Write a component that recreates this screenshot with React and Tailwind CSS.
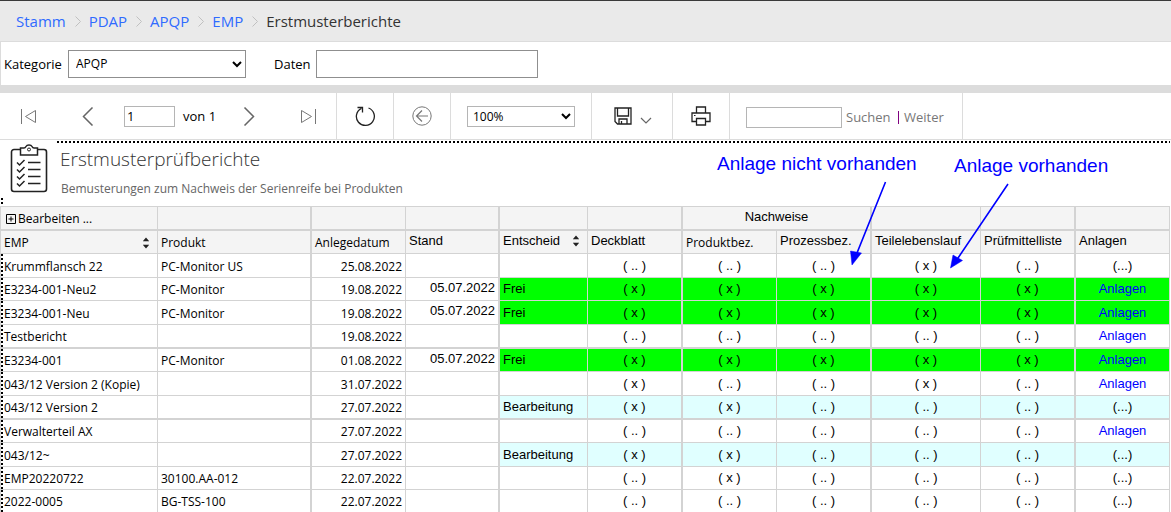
import React from "react";

const UI = "font-['Open_Sans','Noto_Sans',sans-serif]";
const ARIAL = "font-['Liberation_Sans',Arial,sans-serif]";

const crumbs = ["Stamm", "PDAP", "APQP", "EMP"];

const N = "( .. )";
const X = "( x )";
const LINK = "Anlagen";
const NONE = "(...)";

const rows = [
  { emp: "Krummflansch 22", produkt: "PC-Monitor US", angelegt: "25.08.2022", marks: [N, N, N, X, N], anlagen: NONE, size: "h-6" },
  { emp: "E3234-001-Neu2", produkt: "PC-Monitor", angelegt: "19.08.2022", stand: "05.07.2022", status: "Frei", marks: [X, X, X, X, X], anlagen: LINK, size: "h-[23px]" },
  { emp: "E3234-001-Neu", produkt: "PC-Monitor", angelegt: "19.08.2022", stand: "05.07.2022", status: "Frei", marks: [X, X, X, X, X], anlagen: LINK, size: "h-6" },
  { emp: "Testbericht", angelegt: "19.08.2022", marks: [N, N, N, N, N], anlagen: LINK, size: "h-6", thick: true },
  { emp: "E3234-001", produkt: "PC-Monitor", angelegt: "01.08.2022", stand: "05.07.2022", status: "Frei", marks: [X, X, X, X, X], anlagen: LINK, size: "h-[23px]" },
  { emp: "043/12 Version 2 (Kopie)", angelegt: "31.07.2022", marks: [X, N, N, X, N], anlagen: LINK, size: "h-6" },
  { emp: "043/12 Version 2", angelegt: "27.07.2022", status: "Bearbeitung", marks: [X, X, N, N, N], anlagen: NONE, size: "h-6", thick: true },
  { emp: "Verwalterteil AX", angelegt: "27.07.2022", marks: [N, N, N, N, N], anlagen: LINK, size: "h-[23px]" },
  { emp: "043/12~", angelegt: "27.07.2022", status: "Bearbeitung", marks: [X, X, N, N, N], anlagen: NONE, size: "h-6" },
  { emp: "EMP20220722", produkt: "30100.AA-012", angelegt: "22.07.2022", marks: [N, X, N, N, N], anlagen: NONE, size: "h-[23px]" },
  { emp: "2022-0005", produkt: "BG-TSS-100", angelegt: "22.07.2022", marks: [N, N, N, N, N], anlagen: NONE, size: "h-[22px]", last: true },
];

const statusBg = { Frei: "bg-[#00ff00]", Bearbeitung: "bg-[#e0ffff]" };

const DOTS_X = "bg-[repeating-linear-gradient(90deg,#000_0_2px,transparent_2px_4px)]";
const DOTS_Y = "bg-[repeating-linear-gradient(180deg,#000_0_2px,transparent_2px_4px)]";

function Icon({ w, h, children, className = "" }) {
  return (
    <svg width={w} height={h} viewBox={`0 0 ${w} ${h}`} fill="none" stroke="currentColor" className={`block shrink-0 ${className}`} aria-hidden="true">
      {children}
    </svg>
  );
}

function SortButton({ label }) {
  return (
    <button type="button" aria-label={label} className="shrink-0">
      <Icon w={8} h={12}>
        <path d="M4 0.5 7 4H1ZM4 11.5 1 8h6Z" fill="#222" stroke="none" />
        <path d="M1 4.5h6M1 7.5h6" stroke="#bbb" />
      </Icon>
    </button>
  );
}

function Breadcrumb() {
  return (
    <nav aria-label="Pfad" className="flex h-[42px] items-center border-t border-b border-t-[#3a3a3a] border-b-[#dcdcdc] bg-[#eaeaea] pl-4 text-[15px] leading-5">
      {crumbs.map((c) => (
        <span key={c} className="flex items-center">
          <a href="#" className="text-[#2f6bff]">{c}</a>
          <Icon w={6} h={11} className="mr-2 ml-[9px] text-[#c0c0c0]">
            <path d="M0.5 0.5 5.5 5.5 0.5 10.5" />
          </Icon>
        </span>
      ))}
      <span className="text-[#333]">Erstmusterberichte</span>
    </nav>
  );
}

function Filters() {
  return (
    <form className="flex h-[43px] items-center border-l border-[#dcdcdc] pl-[3px] text-[13px]">
      <label htmlFor="kat" className="w-16 pt-[3px]">Kategorie</label>
      <select id="kat" defaultValue="APQP" className="h-7 w-[178px] border border-[#8f8f8f] bg-white px-[3px] text-[12px]">
        <option>APQP</option>
      </select>
      <label htmlFor="daten" className="ml-7 w-[42px] pt-[3px]">Daten</label>
      <input id="daten" className="h-7 w-[222px] border border-[#8f8f8f] bg-white px-1" />
    </form>
  );
}

function Toolbar() {
  const group = "flex h-full shrink-0 items-center border-r border-[#dcdcdc]";
  return (
    <div role="toolbar" aria-label="Bericht" className="flex h-[55px] items-center border-t-8 border-b border-[#dcdcdc] text-[13px]">
      <div className={`${group} w-[337px] pl-5`}>
        <button type="button" aria-label="Erste Seite" className="text-[#777]">
          <Icon w={16} h={15}><path d="M1.5 0v15M15.5 1.5v12L5.5 7.5Z" /></Icon>
        </button>
        <button type="button" aria-label="Vorherige Seite" className="ml-[46px] text-[#666]">
          <Icon w={12} h={19}><path d="M10.5 0.5 1.5 9.5 10.5 18.5" strokeWidth="1.5" /></Icon>
        </button>
        <input aria-label="Seite" defaultValue="1" className="ml-[30px] h-[21px] w-[51px] border border-[#b5b5b5] px-[2px]" />
        <span className="ml-2 w-[58px] pt-[2px]">von 1</span>
        <button type="button" aria-label="Nächste Seite" className="ml-[2px] text-[#666]">
          <Icon w={12} h={19}><path d="M1.5 0.5 10.5 9.5 1.5 18.5" strokeWidth="1.5" /></Icon>
        </button>
        <button type="button" aria-label="Letzte Seite" className="ml-[46px] text-[#777]">
          <Icon w={16} h={15}><path d="M14.5 0v15M0.5 1.5v12L10.5 7.5Z" /></Icon>
        </button>
      </div>
      <div className={`${group} w-[57px] justify-center`}>
        <button type="button" aria-label="Aktualisieren" className="text-[#222]">
          <Icon w={21} h={21}>
            <path d="M13.5 2a9 9 0 1 1-7 .3" strokeWidth="1.3" />
            <path d="M2.5 1.5h5v5" strokeWidth="1.3" />
          </Icon>
        </button>
      </div>
      <div className={`${group} w-[57px] justify-center`}>
        <button type="button" aria-label="Zurück" className="text-[#777]">
          <Icon w={20} h={20}>
            <circle cx="10" cy="10" r="9.2" />
            <path d="M16 10H4.5M10 4.5 4.5 10l5.5 5.5" strokeWidth="1.2" />
          </Icon>
        </button>
      </div>
      <div className={`${group} w-[141px] pl-4`}>
        <select aria-label="Zoom" defaultValue="100%" className="h-[21px] w-[108px] border border-[#b5b5b5] bg-white px-px text-[12px]">
          <option>100%</option>
        </select>
      </div>
      <div className={`${group} w-[81px] pl-[22px]`}>
        <button type="button" aria-label="Exportieren" className="flex items-end gap-2 text-[#222]">
          <Icon w={18} h={18}>
            <path d="M1 1h16v16H3.5L1 14.5Z" strokeWidth="1.3" />
            <path d="M3.5 1v8h11V1M5 17v-5h8v5M7.5 14v3" strokeWidth="1.3" />
          </Icon>
          <Icon w={12} h={8}><path d="M1 1l5 5 5-5" stroke="#666" strokeWidth="1.2" /></Icon>
        </button>
      </div>
      <div className={`${group} w-[57px] justify-center`}>
        <button type="button" aria-label="Drucken" className="text-[#222]">
          <Icon w={20} h={20}>
            <path d="M5.5 7V1h9v6M5.5 15.5H1V7h18v8.5h-4.5M5.5 12.5h9V19h-9Z" strokeWidth="1.3" />
            <path d="M3 9.5h1.5" />
          </Icon>
        </button>
      </div>
      <div className={`${group} w-[233px] pt-[2px] pl-4 text-[#777]`}>
        <input aria-label="Suchtext" className="h-[21px] w-24 border border-[#b5b5b5] px-1" />
        <button type="button" className="ml-1 w-[52px] pt-[2px] text-left">Suchen</button>
        <span className="h-[13px] w-px bg-[#800080]" />
        <button type="button" className="ml-[5px] pt-[2px]">Weiter</button>
      </div>
    </div>
  );
}

function ClipboardIcon() {
  return (
    <Icon w={38} h={49} className="text-[#222]">
      <path d="M10 5.5H4A2.5 2.5 0 0 0 1.5 8v37A2.500 2.500 0 0 0 4 47.500h30a2.500 2.500 0 0 0 2.500-2.500V8A2.500 2.500 0 0 0 34 5.500h-6" strokeWidth="1.600" />
      <path d="M10.500 11V4H14c1 0 1.500-.5 2-1.500 1-2 5-2 6 0 .5 1 1 1.500 2 1.500h3.500v7Z" strokeWidth="1.500" />
      <circle cx="19" cy="5.500" r="1.500" />
      <path d="M18 18.500H30.500M18 25.500H30.500M18 32.500H30.500M18 39.500H30.500" strokeWidth="1.500" />
      <path d="M7 18.500l2.500 2.500 5-5M7 25.500l2.500 2.500 5-5M7 32.500l2.500 2.500 5-5M7 39.500l2.500 2.500 5-5" strokeWidth="1.500" />
    </Icon>
  );
}

function Annotations() {
  return (
    <div className={`pointer-events-none absolute inset-0 text-[19px] leading-6 text-[#0000ff] ${ARIAL}`}>
      <span className="absolute top-3 left-[717px] whitespace-nowrap">Anlage nicht vorhanden</span>
      <span className="absolute top-[14px] left-[954px] whitespace-nowrap">Anlage vorhanden</span>
      <svg className="absolute top-[41px] left-[845px]" width="170" height="90" viewBox="845 181 170 90" fill="#0000ff" stroke="#0000ff" aria-hidden="true">
        <path d="M885.5 182 855 258M1008 184 956 261" strokeWidth="1.6" />
        <path d="M850.5 251 861.5 253 852 265ZM953 255 962.5 260.5 950.5 268Z" strokeWidth="0.5" />
      </svg>
    </div>
  );
}

function HeadCell({ children, right = "border-r", bottom = "border-b", font = ARIAL, left = "", span, align = "align-top", center }) {
  return (
    <th colSpan={span} className={`${right} ${bottom} ${left} ${font} ${align} border-[#d3d3d3] bg-[#f4f4f4] px-[3px] font-normal ${center ? "text-center" : "text-left"}`}>
      {children}
    </th>
  );
}

function ReportTable() {
  const seg = `${UI} text-[12px] leading-5`;
  const ar = `${ARIAL} text-[13px] leading-5`;
  return (
    <table className="w-full table-fixed border-separate border-spacing-0 border-t border-[#d3d3d3] whitespace-nowrap">
      <colgroup>
        <col className="w-[158px]" /><col className="w-[154px]" /><col className="w-[94px]" /><col className="w-[94px]" />
        <col className="w-[88px]" /><col className="w-[95px]" /><col className="w-[94px]" /><col className="w-[95px]" />
        <col className="w-[109px]" /><col className="w-[95px]" /><col className="w-[94px]" />
      </colgroup>
      <thead>
        <tr className="h-6">
          <HeadCell font={seg} left="border-l" bottom="border-b-2" align="align-bottom">
            <button type="button" className="flex items-center gap-[2px] pl-[2px]">
              <Icon w={10} h={10} className="text-black"><path d="M0.5 0.5h9v9h-9ZM2.5 5h5M5 2.5v5" /></Icon>
              Bearbeiten ...
            </button>
          </HeadCell>
          <HeadCell right="border-r-2" bottom="border-b-2" />
          <HeadCell bottom="border-b-2" />
          <HeadCell right="border-r-2" bottom="border-b-2" />
          <HeadCell bottom="border-b-2" />
          <HeadCell right="border-r-2" bottom="border-b-2" />
          <HeadCell font={ar} span={2} center right="border-r-2" bottom="border-b-2">Nachweise</HeadCell>
          <HeadCell bottom="border-b-2" />
          <HeadCell right="border-r-2" bottom="border-b-2" />
          <HeadCell bottom="border-b-2" />
        </tr>
        <tr className="h-[23px]">
          <HeadCell font={seg} left="border-l" align="align-bottom">
            <div className="flex items-center justify-between pr-1">EMP<SortButton label="Nach EMP sortieren" /></div>
          </HeadCell>
          <HeadCell font={seg} right="border-r-2" align="align-bottom">Produkt</HeadCell>
          <HeadCell font={seg} align="align-bottom">Anlegedatum</HeadCell>
          <HeadCell font={ar} right="border-r-2">Stand</HeadCell>
          <HeadCell font={ar}>
            <div className="flex items-center justify-between pr-1">Entscheid<SortButton label="Nach Entscheid sortieren" /></div>
          </HeadCell>
          <HeadCell font={ar} right="border-r-2">Deckblatt</HeadCell>
          <HeadCell font={seg} align="align-bottom">Produktbez.</HeadCell>
          <HeadCell font={ar} right="border-r-2">Prozessbez.</HeadCell>
          <HeadCell font={ar}>Teilelebenslauf</HeadCell>
          <HeadCell font={ar} right="border-r-2">Prüfmittelliste</HeadCell>
          <HeadCell font={ar}>Anlagen</HeadCell>
        </tr>
      </thead>
      <tbody>
        {rows.map((r) => {
          const b = r.last ? "" : r.thick ? "border-b-2" : "border-b";
          const cell = `${b} border-[#d3d3d3] px-[3px] py-0`;
          const bg = statusBg[r.status] || "";
          return (
            <tr key={r.emp} className={r.size}>
              <td className={`${cell} ${seg} border-r border-l align-bottom ${DOTS_Y} bg-[length:2px_100%] bg-no-repeat`}>{r.emp}</td>
              <td className={`${cell} ${seg} border-r-2 align-bottom`}>{r.produkt}</td>
              <td className={`${cell} ${seg} border-r text-right align-bottom`}>{r.angelegt}</td>
              <td className={`${cell} ${ar} border-r-2 text-right align-top`}>{r.stand}</td>
              <td className={`${cell} ${ar} ${bg} border-r align-middle`}>{r.status}</td>
              {r.marks.map((m, i) => (
                <td key={i} className={`${cell} ${ar} ${bg} text-center align-middle ${i % 2 ? "border-r" : "border-r-2"}`}>{m}</td>
              ))}
              <td className={`${cell} ${ar} ${bg} border-r text-center align-middle`}>
                {r.anlagen === LINK ? <a href="#" className="text-[#0000ff]">{LINK}</a> : r.anlagen}
              </td>
            </tr>
          );
        })}
      </tbody>
    </table>
  );
}

export default function App() {
  return (
    <div className={`bg-white text-black ${UI}`}>
      <Breadcrumb />
      <Filters />
      <Toolbar />
      <main className="relative pr-px">
        <header className="flex h-[66px]">
          <div className="flex w-[10px] items-end pl-px">
            <div className={`h-2 w-[2px] ${DOTS_Y}`} />
          </div>
          <div className="pt-1"><ClipboardIcon /></div>
          <div className="ml-[9px] flex-1 pt-px">
            <div className={`h-[2px] ${DOTS_X}`} />
            <h1 className="mt-1 pl-[3px] text-[19px] leading-6 font-light text-[#333]">Erstmusterprüfberichte</h1>
            <p className="mt-2 pl-1 text-[12px] leading-5 text-[#666]">Bemusterungen zum Nachweis der Serienreife bei Produkten</p>
          </div>
        </header>
        <ReportTable />
        <Annotations />
      </main>
    </div>
  );
}
